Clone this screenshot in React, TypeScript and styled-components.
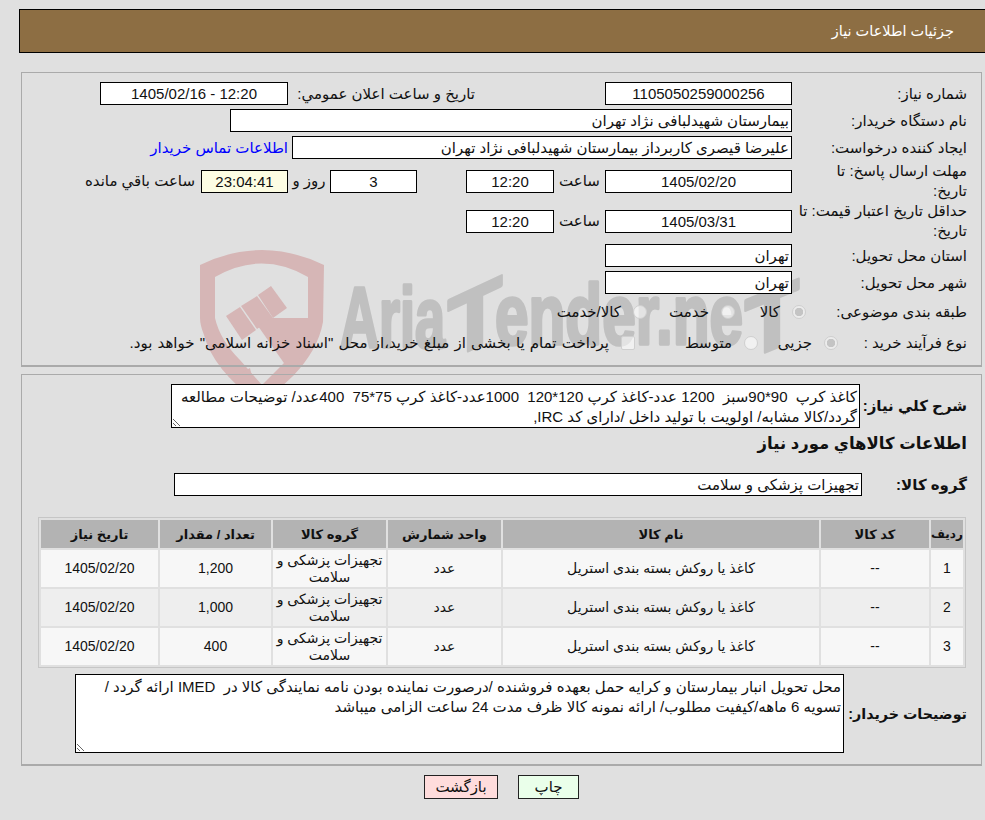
import styled, { createGlobalStyle } from 'styled-components';

const GlobalStyle = createGlobalStyle`
  html, body {
    margin: 0;
    background: #e0e0e0;
    overflow: hidden;
  }
  body {
    font-family: 'Liberation Sans', 'DejaVu Sans', sans-serif;
    font-size: 15px;
    color: #111;
  }
`;

const Page = styled.div`
  position: relative;
  direction: rtl;
  width: 985px;
  height: 820px;
  padding-top: 9px;
  box-sizing: border-box;
  overflow: hidden;
`;

const Watermark = styled.svg`
  position: absolute;
  left: 190px;
  top: 240px;
  direction: ltr;
  pointer-events: none;
`;

const Header = styled.div`
  height: 44px;
  margin-left: 19px;
  padding-right: 31px;
  display: flex;
  align-items: center;
  box-sizing: border-box;
  background: #8d6e43;
  border: 1px solid #000;
  border-right: none;
  color: #fff;
  font-size: 14.5px;
`;

const Panel = styled.div<{ $mt: number; $pt: number; $h: number }>`
  position: relative;
  width: 961px;
  height: ${(p) => p.$h}px;
  margin: ${(p) => p.$mt}px 3px 0 21px;
  padding: ${(p) => p.$pt}px 14px 0 0;
  box-sizing: border-box;
  border: 1px solid #aaa;
  border-bottom-width: 2px;
`;

const Row = styled.div<{ $h: number; $mt?: number }>`
  display: flex;
  align-items: center;
  height: ${(p) => p.$h}px;
  margin-top: ${(p) => p.$mt ?? 0}px;
`;

const Label = styled.div<{ $w?: number }>`
  width: ${(p) => p.$w ?? 166}px;
  margin-left: 9px;
  flex: none;
  line-height: 20px;
  white-space: nowrap;
`;

const InlineLabel = styled.span<{ $w?: number; $mr?: number; $ml?: number; $center?: boolean }>`
  width: ${(p) => (p.$w ? `${p.$w}px` : 'auto')};
  margin-right: ${(p) => p.$mr ?? 0}px;
  margin-left: ${(p) => p.$ml ?? 0}px;
  flex: none;
  text-align: ${(p) => (p.$center ? 'center' : 'right')};
  white-space: nowrap;
`;

const Field = styled.div<{ $w: number; $center?: boolean; $bg?: string; $mr?: number }>`
  width: ${(p) => p.$w}px;
  height: 23px;
  margin-right: ${(p) => p.$mr ?? 0}px;
  flex: none;
  box-sizing: border-box;
  padding: 0 2px;
  display: flex;
  align-items: center;
  justify-content: ${(p) => (p.$center ? 'center' : 'flex-start')};
  background: ${(p) => p.$bg ?? '#fff'};
  border: 1px solid #000;
  white-space: nowrap;
`;

const ContactLink = styled.a`
  margin-right: 4px;
  color: #00f;
  white-space: nowrap;
`;

const Choice = styled.label<{ $w?: number }>`
  display: flex;
  align-items: center;
  gap: 12px;
  width: ${(p) => (p.$w ? `${p.$w}px` : 'auto')};
  flex: none;
  white-space: nowrap;
`;

const Radio = styled.input`
  appearance: none;
  width: 14px;
  height: 14px;
  margin: 0;
  flex: none;
  border-radius: 50%;
  border: 1px solid #cfcfcf;
  background: rgba(255, 255, 255, 0.55);
  &:checked {
    background: radial-gradient(circle, #c4c4c4 0 4px, #ececec 4.5px);
  }
`;

const Check = styled.input`
  appearance: none;
  width: 14px;
  height: 14px;
  margin: 0;
  flex: none;
  border-radius: 2px;
  border: 1px solid #cfcfcf;
  background: rgba(255, 255, 255, 0.55);
`;

const LongText = styled.span`
  word-spacing: 1px;
`;

const BoldLabel = styled.div<{ $w: number; $fs?: number }>`
  width: ${(p) => p.$w}px;
  flex: none;
  font-weight: bold;
  font-size: ${(p) => p.$fs ?? 15}px;
  white-space: nowrap;
`;

const Note = styled.textarea<{ $w: number; $h: number }>`
  width: ${(p) => p.$w}px;
  height: ${(p) => p.$h}px;
  flex: none;
  box-sizing: border-box;
  margin: 0;
  padding: 2px 2px;
  background: #fff;
  border: 1px solid #000;
  border-radius: 0;
  outline: none;
  direction: rtl;
  font: inherit;
  line-height: 20px;
  color: #111;
`;

const Heading = styled.div`
  height: 30px;
  display: flex;
  align-items: center;
  font-weight: bold;
  font-size: 16.5px;
`;

const ItemsTable = styled.table`
  width: 928px;
  margin: 21px 1px 0 0;
  border: 1px solid #c6c6c6;
  border-spacing: 2px;
  table-layout: fixed;
  text-align: center;
  font-size: 14px;
`;

const Th = styled.th<{ $w: number; $fs: number }>`
  width: ${(p) => p.$w}px;
  height: 28px;
  padding: 0;
  background: #b3b3b3;
  font-weight: bold;
  font-size: ${(p) => p.$fs}px;
  white-space: nowrap;
`;

const Td = styled.td<{ $alt: boolean }>`
  height: 37px;
  padding: 0;
  line-height: 17px;
  background: ${(p) => (p.$alt ? '#eeeeee' : '#f7f7f7')};
`;

const Buttons = styled.div`
  display: flex;
  justify-content: center;
  gap: 20px;
  margin-top: 9px;
  padding-left: 18px;
`;

const Button = styled.button<{ $bg: string; $w: number }>`
  width: ${(p) => p.$w}px;
  height: 24px;
  padding: 0;
  background: ${(p) => p.$bg};
  border: 1px solid #222;
  border-radius: 0;
  color: #111;
  font: inherit;
`;

const items = [
  { id: 1, qty: '1,200' },
  { id: 2, qty: '1,000' },
  { id: 3, qty: '400' }
];

const columns = [
  { title: 'رديف', w: 32, fs: 12 },
  { title: 'کد کالا', w: 108, fs: 13 },
  { title: 'نام کالا', w: 316, fs: 13 },
  { title: 'واحد شمارش', w: 113, fs: 13 },
  { title: 'گروه کالا', w: 113, fs: 13 },
  { title: 'تعداد / مقدار', w: 111, fs: 13 },
  { title: 'تاریخ نیاز', w: 117, fs: 13 }
];

const summary =
  'کاغذ کرپ  90*90سبز  1200 عدد-کاغذ کرپ 120*120  1000عدد-کاغذ کرپ 75*75  400عدد/ توضیحات مطالعه گردد/کالا مشابه/ اولویت با تولید داخل /دارای کد IRC,';
const buyerNote =
  'محل تحویل انبار بیمارستان و کرایه حمل بعهده فروشنده /درصورت نماینده بودن نامه نمایندگی کالا در  IMED ارائه گردد / تسویه 6 ماهه/کیفیت مطلوب/ ارائه نمونه کالا ظرف مدت 24 ساعت الزامی میباشد';

function AriaWatermark() {
  const wordProps = {
    fill: '#c0c0c0',
    stroke: '#c0c0c0',
    strokeWidth: 3.5,
    strokeLinejoin: 'round' as const,
    fontFamily: "'Liberation Sans', sans-serif",
    fontWeight: 'bold',
    fontSize: 86,
    lengthAdjust: 'spacingAndGlyphs' as const
  };
  return (
    <Watermark width={640} height={170} viewBox="190 240 640 170">
      {/* shield with its gavel */}
      <path
        fill="#d6b6b6"
        fillRule="evenodd"
        d="M200 265 Q262 235 324 265 L323 322 Q318 350 293 376 L262 405 Q214 372 204 335 Q200 325 200 318 Z M215 277 L215 318 Q220 340 240 360 L262 385 L285 362 Q306 340 308 318 L308 277 Q262 250 215 277 Z"
      />
      <path fill="#d6b6b6" d="M226 316 L240 307 L256 330 L242 340 Z" />
      <path fill="#d6b6b6" d="M241 306 L257 296 L273 318 L257 329 Z" />
      <path fill="#d6b6b6" d="M258 295 L271 286 L287 308 L273 318 Z" />
      <path fill="#d6b6b6" d="M258 326 L272 318 L309 318 L309 332 L293 376 Z" />
      <path fill="#d6b6b6" d="M232 378 L250 368 L254 386 L240 386 Z" />
      <text x="340" y="347" textLength="105" {...wordProps}>Aria</text>
      <text transform="translate(448 360) skewY(-25)" textLength="54" {...wordProps}>T</text>
      <text x="495" y="344" textLength="248" {...wordProps}>ender.ne</text>
      <text transform="translate(745 360) skewY(-22)" textLength="54" {...wordProps}>T</text>
    </Watermark>
  );
}

export default function App() {
  return (
    <>
      <GlobalStyle />
      <Page>
        <AriaWatermark />
        <Header>جزئیات اطلاعات نیاز</Header>

        <Panel $mt={19} $pt={7} $h={295}>
          <Row $h={27}>
            <Label>شماره نیاز:</Label>
            <Field $w={187} $center>1105050259000256</Field>
            <InlineLabel $w={181} $mr={130} $ml={6}>تاریخ و ساعت اعلان عمومي:</InlineLabel>
            <Field $w={188} $center>12:20 - 1405/02/16</Field>
          </Row>
          <Row $h={27}>
            <Label>نام دستگاه خریدار:</Label>
            <Field $w={562}>بیمارستان شهیدلبافی نژاد تهران</Field>
          </Row>
          <Row $h={27}>
            <Label>ایجاد کننده درخواست:</Label>
            <Field $w={500}>علیرضا قیصری کاربرداز بیمارستان شهیدلبافی نژاد تهران</Field>
            <ContactLink>اطلاعات تماس خریدار</ContactLink>
          </Row>
          <Row $h={40}>
            <Label>مهلت ارسال پاسخ: تا<br />تاریخ:</Label>
            <Field $w={187} $center>1405/02/20</Field>
            <InlineLabel $w={51} $center>ساعت</InlineLabel>
            <Field $w={88} $center>12:20</Field>
            <Field $w={87} $center $mr={49}>3</Field>
            <InlineLabel $w={42} $center>روز و</InlineLabel>
            <Field $w={87} $center $bg="#fdfde3">23:04:41</Field>
            <InlineLabel $mr={6}>ساعت باقي مانده</InlineLabel>
          </Row>
          <Row $h={40}>
            <Label>حداقل تاریخ اعتبار قیمت: تا<br />تاریخ:</Label>
            <Field $w={187} $center>1405/03/31</Field>
            <InlineLabel $w={51} $center>ساعت</InlineLabel>
            <Field $w={88} $center>12:20</Field>
          </Row>
          <Row $h={29}>
            <Label>استان محل تحویل:</Label>
            <Field $w={187}>تهران</Field>
          </Row>
          <Row $h={25}>
            <Label>شهر محل تحویل:</Label>
            <Field $w={187}>تهران</Field>
          </Row>
          <Row $h={34}>
            <Label $w={152}>طبقه بندی موضوعی:</Label>
            <Choice $w={71}><Radio type="radio" name="kind" disabled defaultChecked />کالا</Choice>
            <Choice $w={88}><Radio type="radio" name="kind" disabled />خدمت</Choice>
            <Choice><Radio type="radio" name="kind" disabled />کالا/خدمت</Choice>
          </Row>
          <Row $h={28}>
            <Label $w={120}>نوع فرآیند خرید :</Label>
            <Choice $w={80}><Radio type="radio" name="process" disabled defaultChecked />جزیی</Choice>
            <Choice $w={123}><Radio type="radio" name="process" disabled />متوسط</Choice>
            <Choice>
              <Check type="checkbox" disabled />
              <LongText>پرداخت تمام یا بخشی از مبلغ خرید،از محل "اسناد خزانه اسلامی" خواهد بود.</LongText>
            </Choice>
          </Row>
        </Panel>

        <Panel $mt={7} $pt={9} $h={392}>
          <Row $h={44}>
            <BoldLabel $w={107}>شرح کلي نیاز:</BoldLabel>
            <Note $w={689} $h={44} readOnly defaultValue={summary} />
          </Row>
          <Heading>اطلاعات کالاهاي مورد نياز</Heading>
          <Row $h={23} $mt={15}>
            <BoldLabel $w={105}>گروه کالا:</BoldLabel>
            <Field $w={688}>تجهیزات پزشکی و سلامت</Field>
          </Row>
          <ItemsTable>
            <thead>
              <tr>
                {columns.map((c) => (
                  <Th key={c.title} $w={c.w} $fs={c.fs}>{c.title}</Th>
                ))}
              </tr>
            </thead>
            <tbody>
              {items.map((item) => (
                <tr key={item.id}>
                  <Td $alt={item.id === 2}>{item.id}</Td>
                  <Td $alt={item.id === 2}>--</Td>
                  <Td $alt={item.id === 2}>کاغذ یا روکش بسته بندی استریل</Td>
                  <Td $alt={item.id === 2}>عدد</Td>
                  <Td $alt={item.id === 2}>تجهیزات پزشکی و سلامت</Td>
                  <Td $alt={item.id === 2}>{item.qty}</Td>
                  <Td $alt={item.id === 2}>1405/02/20</Td>
                </tr>
              ))}
            </tbody>
          </ItemsTable>
          <Row $h={79} $mt={6}>
            <BoldLabel $w={123} $fs={14.3}>توضیحات خریدار:</BoldLabel>
            <Note $w={769} $h={79} readOnly defaultValue={buyerNote} />
          </Row>
        </Panel>

        <Buttons>
          <Button $bg="#eaffea" $w={61}>چاپ</Button>
          <Button $bg="#ffdcdc" $w={74}>بازگشت</Button>
        </Buttons>
      </Page>
    </>
  );
}
